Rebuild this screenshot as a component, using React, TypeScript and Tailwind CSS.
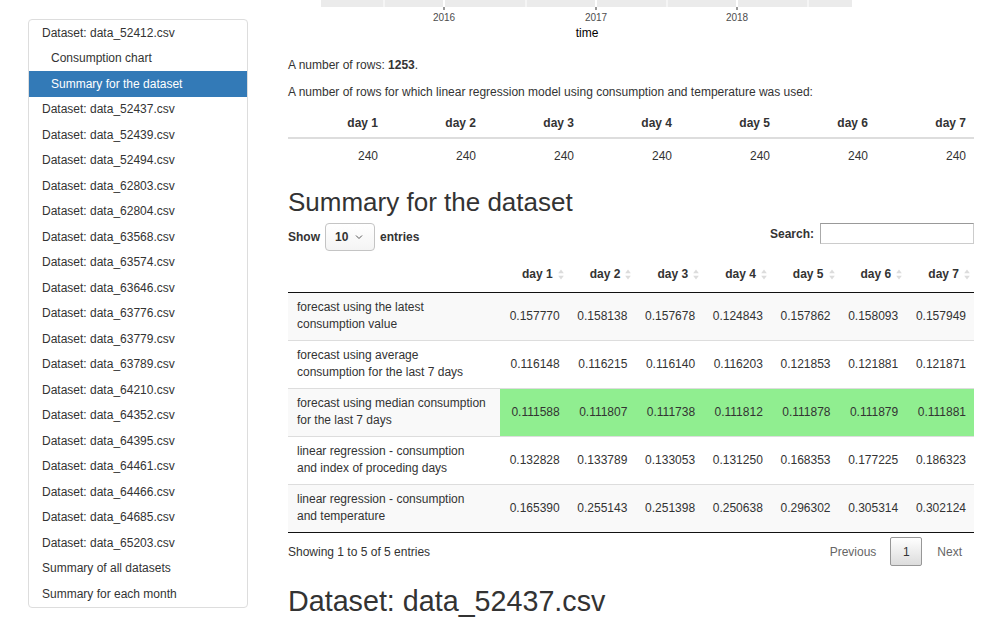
import React from "react";

const datasets = [
  "52437", "52439", "52494", "62803", "62804", "63568", "63574", "63646",
  "63776", "63779", "63789", "64210", "64352", "64395", "64461", "64466",
  "64685", "65203",
];

const days = ["day 1", "day 2", "day 3", "day 4", "day 5", "day 6", "day 7"];

const summaryRows = [
  {
    label: ["forecast using the latest", "consumption value"],
    values: ["0.157770", "0.158138", "0.157678", "0.124843", "0.157862", "0.158093", "0.157949"],
    best: false,
  },
  {
    label: ["forecast using average", "consumption for the last 7 days"],
    values: ["0.116148", "0.116215", "0.116140", "0.116203", "0.121853", "0.121881", "0.121871"],
    best: false,
  },
  {
    label: ["forecast using median consumption", "for the last 7 days"],
    values: ["0.111588", "0.111807", "0.111738", "0.111812", "0.111878", "0.111879", "0.111881"],
    best: true,
  },
  {
    label: ["linear regression - consumption", "and index of proceding days"],
    values: ["0.132828", "0.133789", "0.133053", "0.131250", "0.168353", "0.177225", "0.186323"],
    best: false,
  },
  {
    label: ["linear regression - consumption", "and temperature"],
    values: ["0.165390", "0.255143", "0.251398", "0.250638", "0.296302", "0.305314", "0.302124"],
    best: false,
  },
];

function SortIcon() {
  return (
    <svg width="6" height="11" viewBox="0 0 6 11" className="shrink-0">
      <path d="M3 0.5 L5.8 4.3 L0.2 4.3 Z" fill="#dcdcdc" />
      <path d="M3 10.5 L5.8 6.7 L0.2 6.7 Z" fill="#dcdcdc" />
    </svg>
  );
}

function Sidebar() {
  const item = "h-[25.5px] flex items-center text-[12px] text-[#333]";
  return (
    <div className="mt-[19px] w-[220px] shrink-0 self-start rounded-[4px] border border-[#ddd] bg-white">
      <div className={`${item} pl-[13px]`}>Dataset: data_52412.csv</div>
      <div className={`${item} pl-[22px] text-[10.6px]`}>Consumption chart</div>
      <div className={`${item} pl-[22px] text-[10.6px] bg-[#337ab7] text-white`}>
        Summary for the dataset
      </div>
      {datasets.map((d) => (
        <div key={d} className={`${item} pl-[13px]`}>
          Dataset: data_{d}.csv
        </div>
      ))}
      <div className={`${item} pl-[13px]`}>Summary of all datasets</div>
      <div className={`${item} pl-[13px]`}>Summary for each month</div>
    </div>
  );
}

function ChartTail() {
  // bottom edge of the ggplot chart, scrolled mostly out of view
  const major = [156, 308, 449];
  const minor = [96, 238, 379, 520];
  return (
    <svg width="686" height="57" className="block">
      <rect x="33" y="0" width="531" height="7" fill="#ebebeb" />
      {minor.map((x) => (
        <rect key={x} x={x - 0.5} y="0" width="1" height="7" fill="#ffffff" />
      ))}
      {major.map((x) => (
        <rect key={x} x={x - 1} y="0" width="2" height="7" fill="#ffffff" />
      ))}
      {major.map((x) => (
        <rect key={"t" + x} x={x - 0.5} y="7" width="1" height="3" fill="#333333" />
      ))}
      {["2016", "2017", "2018"].map((y, i) => (
        <text
          key={y}
          x={major[i]}
          y="21"
          textAnchor="middle"
          fontSize="10"
          fill="#4d4d4d"
          fontFamily="Liberation Sans, Arial, sans-serif"
        >
          {y}
        </text>
      ))}
      <text
        x="299"
        y="36.5"
        textAnchor="middle"
        fontSize="12"
        fill="#000"
        fontFamily="Liberation Sans, Arial, sans-serif"
      >
        time
      </text>
    </svg>
  );
}

function RowsTable() {
  return (
    <table className="w-full table-fixed border-collapse text-[12px] text-[#333]">
      <thead>
        <tr className="border-b-2 border-[#ddd]">
          {days.map((d) => (
            <th key={d} className="py-[5px] pr-[8px] text-right font-bold leading-[17px]">
              {d}
            </th>
          ))}
        </tr>
      </thead>
      <tbody>
        <tr>
          {days.map((d) => (
            <td key={d} className="py-[8.5px] pr-[8px] text-right leading-[17px]">
              240
            </td>
          ))}
        </tr>
      </tbody>
    </table>
  );
}

function SummaryTable() {
  return (
    <div className="text-[12px] text-[#333]">
      <div className="flex h-[29px] items-start justify-between">
        <div className="flex h-[29px] items-center font-bold">
          <span>Show</span>
          <div className="mx-[5px] flex h-[28px] w-[50px] items-center justify-between rounded-[4px] border border-[#c4c4c4] bg-gradient-to-b from-white to-[#f4f4f4] pl-[9px] pr-[11px] font-normal">
            <span className="font-bold">10</span>
            <svg width="8" height="6" viewBox="0 0 8 6">
              <path d="M1 1.5 L4 4.5 L7 1.5" stroke="#555" strokeWidth="1" fill="none" />
            </svg>
          </div>
          <span>entries</span>
        </div>
        <div className="flex h-[22px] items-center font-bold">
          <span className="mr-[6px]">Search:</span>
          <div className="h-[21px] w-[154px] border border-[#ccc] border-t-[#999] border-l-[#aaa] bg-white" />
        </div>
      </div>

      <table className="mt-[5px] w-full table-fixed border-collapse">
        <colgroup>
          <col className="w-[212px]" />
          {days.map((d) => (
            <col key={d} />
          ))}
        </colgroup>
        <thead>
          <tr className="border-b border-[#111]">
            <th className="py-[9px]" />
            {days.map((d) => (
              <th key={d} className="py-[9px] pr-[4px] font-bold leading-[17px]">
                <div className="flex items-center justify-end gap-[5px]">
                  <span>{d}</span>
                  <SortIcon />
                </div>
              </th>
            ))}
          </tr>
        </thead>
        <tbody>
          {summaryRows.map((r, i) => (
            <tr
              key={i}
              className={`border-t border-[#ddd] first:border-t-0 ${i % 2 === 0 ? "bg-[#f9f9f9]" : "bg-white"}`}
            >
              <td className="h-[48px] py-[6px] pl-[9px] text-left leading-[17px]">
                {r.label[0]}
                <br />
                {r.label[1]}
              </td>
              {r.values.map((v, j) => (
                <td
                  key={j}
                  className={`h-[48px] pr-[8px] text-right ${r.best ? "bg-[#90ee90]" : ""}`}
                >
                  {v}
                </td>
              ))}
            </tr>
          ))}
        </tbody>
      </table>
      <div className="border-t border-[#111]" />

      <div className="mt-[4px] flex items-center justify-between">
        <span>Showing 1 to 5 of 5 entries</span>
        <div className="flex items-center">
          <span className="mr-[14px] text-[#666]">Previous</span>
          <div className="flex h-[29px] w-[32px] items-center justify-center rounded-[2px] border border-[#979797] bg-gradient-to-b from-white to-[#dcdcdc] text-[#333]">
            1
          </div>
          <span className="ml-[15px] mr-[12px] text-[#666]">Next</span>
        </div>
      </div>
    </div>
  );
}

export default function App() {
  return (
    <div className="h-[627px] w-[1000px] overflow-hidden bg-white font-['Liberation_Sans',Arial,sans-serif] text-[#333]">
      <div className="flex gap-[40px] pl-[28px]">
        <Sidebar />
        <div className="w-[686px] shrink-0">
          <ChartTail />
          <p className="mb-[10px] text-[12px] leading-[17px]">
            A number of rows: <b>1253</b>.
          </p>
          <p className="mb-[9px] text-[12px] leading-[17px]">
            A number of rows for which linear regression model using consumption and temperature was used:
          </p>
          <RowsTable />
          <h3 className="mt-[15px] mb-[6px] text-[26px] leading-[28.6px] font-normal">
            Summary for the dataset
          </h3>
          <SummaryTable />
          <h3 className="mt-[20px] text-[28.7px] leading-[31.6px] font-normal">
            Dataset: data_52437.csv
          </h3>
        </div>
      </div>
    </div>
  );
}
